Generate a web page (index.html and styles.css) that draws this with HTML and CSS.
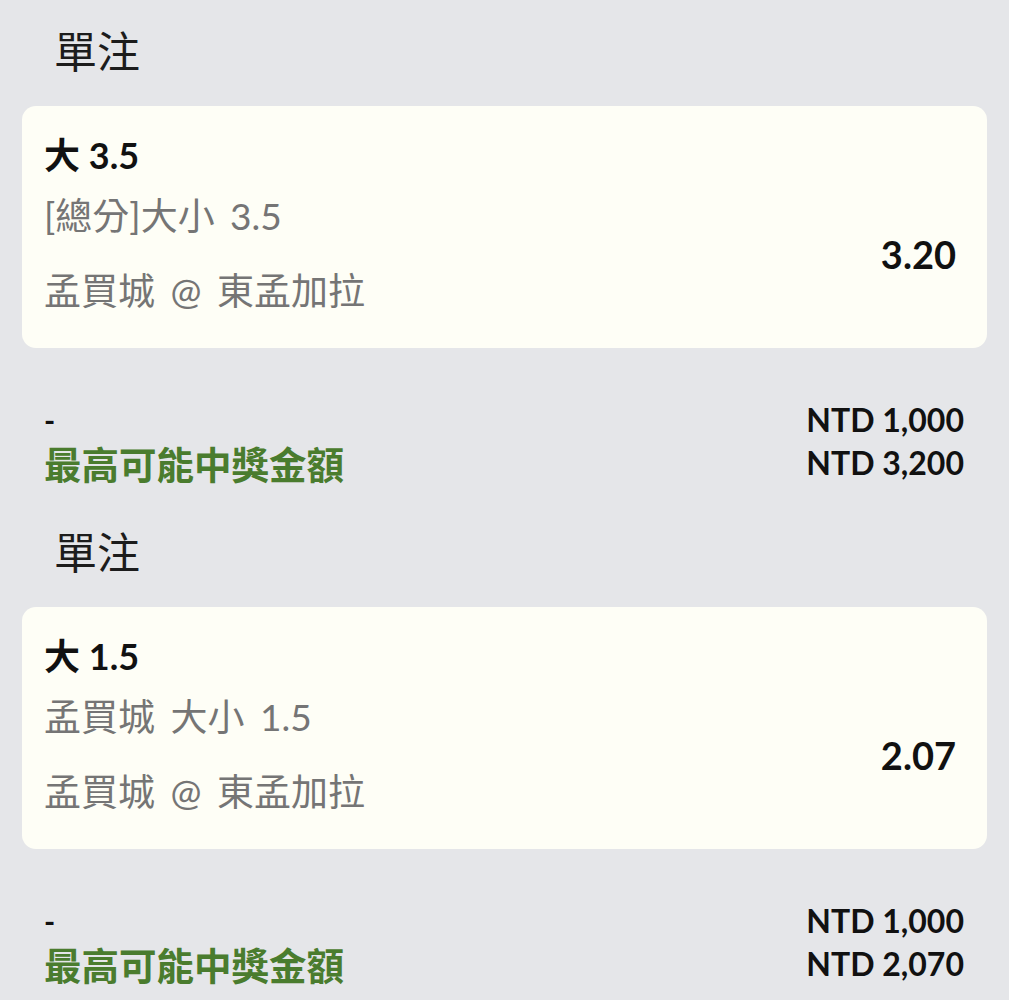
FILE: index.html
```html
<!DOCTYPE html>
<html lang="zh-Hant">
<head>
    <meta charset="UTF-8">
    <meta name="viewport" content="width=device-width, initial-scale=1.0">
    <title>單注</title>
    <link rel="stylesheet" href="styles.css">
</head>
<body>
    <div class="bet">
        <div class="bet-type">單注</div>
        <div class="bet-card">
            <div class="selection">大 3.5</div>
            <div class="bet-row">
                <div class="bet-info">
                    <div class="market">[總分]大小 3.5</div>
                    <div class="event">孟買城 @ 東孟加拉</div>
                </div>
                <div class="odds">3.20</div>
            </div>
        </div>
        <div class="bet-summary">
            <div class="summary-row">
                <span class="stake-label">-</span>
                <span class="amount">NTD 1,000</span>
            </div>
            <div class="summary-row">
                <span class="win-label">最高可能中獎金額</span>
                <span class="amount">NTD 3,200</span>
            </div>
        </div>
    </div>

    <div class="bet">
        <div class="bet-type">單注</div>
        <div class="bet-card">
            <div class="selection">大 1.5</div>
            <div class="bet-row">
                <div class="bet-info">
                    <div class="market">孟買城 大小 1.5</div>
                    <div class="event">孟買城 @ 東孟加拉</div>
                </div>
                <div class="odds">2.07</div>
            </div>
        </div>
        <div class="bet-summary">
            <div class="summary-row">
                <span class="stake-label">-</span>
                <span class="amount">NTD 1,000</span>
            </div>
            <div class="summary-row">
                <span class="win-label">最高可能中獎金額</span>
                <span class="amount">NTD 2,070</span>
            </div>
        </div>
    </div>
</body>
</html>
```

FILE: styles.css
```css
body {
    font-family: Lato, "Noto Sans CJK TC", sans-serif;
    margin: 0;
    background-color: #e5e6e9;
    color: #111;
}
.bet {
    padding: 24px 22px 17px;
}
.bet-type {
    font-size: 43px;
    line-height: 56px;
    padding-left: 32px;
    color: #1c1c1c;
}
.bet-card {
    margin-top: 26px;
    height: 242px;
    box-sizing: border-box;
    padding: 29px 31px 0 22px;
    background-color: #fefef6;
    border-radius: 14px;
}
.selection {
    font-size: 36px;
    font-weight: bold;
    line-height: 40px;
}
.bet-row {
    display: flex;
    justify-content: space-between;
    align-items: center;
    margin-top: 19px;
}
.market,
.event {
    font-size: 37px;
    line-height: 44px;
    word-spacing: 6px;
    color: #757575;
}
.event {
    margin-top: 31px;
}
.odds {
    font-size: 38px;
    font-weight: bold;
}
.bet-summary {
    margin-top: 50px;
    padding: 0 23px 0 22px;
}
.summary-row {
    display: flex;
    justify-content: space-between;
    align-items: center;
    height: 43px;
}
.stake-label {
    font-size: 30px;
    font-weight: bold;
}
.win-label {
    font-size: 37.5px;
    font-weight: bold;
    color: #4a7c2e;
}
.amount {
    font-size: 32px;
    font-weight: bold;
}
```
